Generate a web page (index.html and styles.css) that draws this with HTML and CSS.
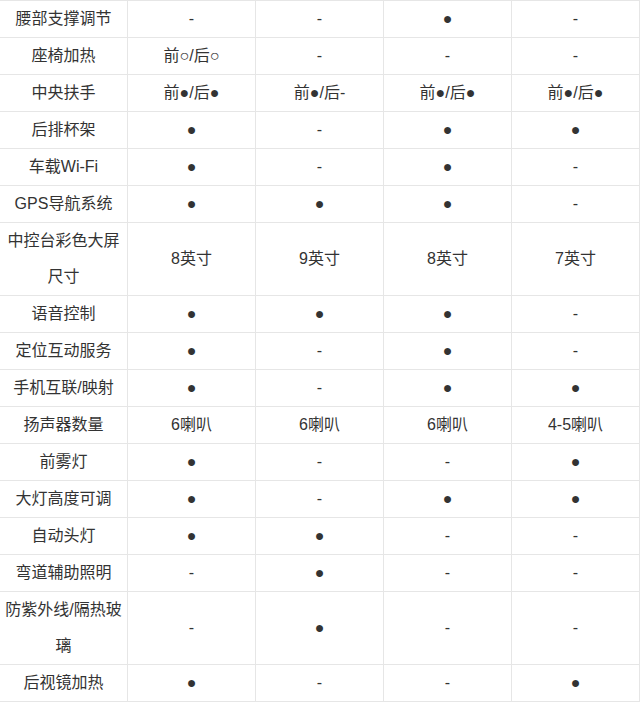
FILE: index.html
```html
<!DOCTYPE html>
<html lang="zh-CN">
<head>
<meta charset="utf-8">
<title>配置对比</title>
<link rel="stylesheet" href="styles.css">
</head>
<body>
<table class="spec">
  <tbody>
    <tr><td>腰部支撑调节</td><td>-</td><td>-</td><td>●</td><td>-</td></tr>
    <tr><td>座椅加热</td><td>前○/后○</td><td>-</td><td>-</td><td>-</td></tr>
    <tr><td>中央扶手</td><td>前●/后●</td><td>前●/后-</td><td>前●/后●</td><td>前●/后●</td></tr>
    <tr><td>后排杯架</td><td>●</td><td>-</td><td>●</td><td>●</td></tr>
    <tr><td>车载Wi-Fi</td><td>●</td><td>-</td><td>●</td><td>-</td></tr>
    <tr><td>GPS导航系统</td><td>●</td><td>●</td><td>●</td><td>-</td></tr>
    <tr><td>中控台彩色大屏尺寸</td><td>8英寸</td><td>9英寸</td><td>8英寸</td><td>7英寸</td></tr>
    <tr><td>语音控制</td><td>●</td><td>●</td><td>●</td><td>-</td></tr>
    <tr><td>定位互动服务</td><td>●</td><td>-</td><td>●</td><td>-</td></tr>
    <tr><td>手机互联/映射</td><td>●</td><td>-</td><td>●</td><td>●</td></tr>
    <tr><td>扬声器数量</td><td>6喇叭</td><td>6喇叭</td><td>6喇叭</td><td>4-5喇叭</td></tr>
    <tr><td>前雾灯</td><td>●</td><td>-</td><td>-</td><td>●</td></tr>
    <tr><td>大灯高度可调</td><td>●</td><td>-</td><td>●</td><td>●</td></tr>
    <tr><td>自动头灯</td><td>●</td><td>●</td><td>-</td><td>-</td></tr>
    <tr><td>弯道辅助照明</td><td>-</td><td>●</td><td>-</td><td>-</td></tr>
    <tr><td>防紫外线/隔热玻璃</td><td>-</td><td>●</td><td>-</td><td>-</td></tr>
    <tr><td>后视镜加热</td><td>●</td><td>-</td><td>-</td><td>●</td></tr>
  </tbody>
</table>
</body>
</html>
```

FILE: styles.css
```css
html, body {
  margin: 0;
  padding: 0;
  background: #fff;
}

.spec {
  width: 640px;
  table-layout: fixed;
  border-collapse: separate;
  border-spacing: 0;
  border-top: 1px solid #e6e6e6;
  font-family: "Liberation Sans", "Noto Sans CJK SC", sans-serif;
  font-size: 16px;
  color: #333;
}

.spec td {
  height: 36px;
  padding: 0 4px;
  line-height: 36px;
  text-align: center;
  vertical-align: middle;
  border-right: 1px solid #e6e6e6;
  border-bottom: 1px solid #e6e6e6;
  word-break: break-all;
}
```
